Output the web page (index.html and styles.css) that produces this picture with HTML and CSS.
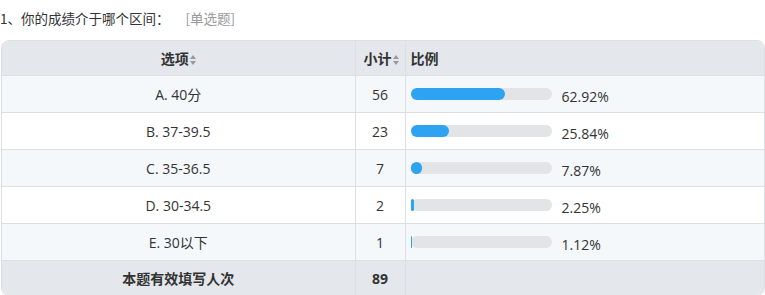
FILE: index.html
```html
<!DOCTYPE html>
<html lang="zh">
<head>
<meta charset="utf-8">
<link rel="stylesheet" href="styles.css">
</head>
<body>
<div class="q-title">1、你的成绩介于哪个区间：<span class="q-type">[单选题]</span></div>
<div class="tbl-wrap">
<table class="tbl">
<colgroup><col class="c1"><col class="c2"><col class="c3"></colgroup>
<thead>
<tr class="head"><th class="center">选项<span class="sort"></span></th><th class="center small">小计<span class="sort"></span></th><th class="left">比例</th></tr>
</thead>
<tbody>
<tr class="odd"><td class="center">A. 40分</td><td class="center">56</td><td><div class="ratio"><div class="bar"><div class="fill" style="width:67%"></div></div><span class="pct">62.92%</span></div></td></tr>
<tr><td class="center">B. 37-39.5</td><td class="center">23</td><td><div class="ratio"><div class="bar"><div class="fill" style="width:27.5%"></div></div><span class="pct">25.84%</span></div></td></tr>
<tr class="odd"><td class="center">C. 35-36.5</td><td class="center">7</td><td><div class="ratio"><div class="bar"><div class="fill" style="width:8%"></div></div><span class="pct">7.87%</span></div></td></tr>
<tr><td class="center">D. 30-34.5</td><td class="center">2</td><td><div class="ratio"><div class="bar"><div class="fill" style="width:3px"></div></div><span class="pct">2.25%</span></div></td></tr>
<tr class="odd"><td class="center">E. 30以下</td><td class="center">1</td><td><div class="ratio"><div class="bar"><div class="fill" style="width:1px"></div></div><span class="pct">1.12%</span></div></td></tr>
</tbody>
<tfoot>
<tr class="foot"><td class="center">本题有效填写人次</td><td class="center">89</td><td></td></tr>
</tfoot>
</table>
</div>
</body>
</html>
```
FILE: styles.css
```css
html, body { margin: 0; padding: 0; background: #fff; }
body {
  font-family: "Open Sans", "Noto Sans CJK SC", sans-serif;
  font-size: 13px;
  color: #333;
  padding: 0 0 0 1px;
}
.q-title {
  height: 40px;
  line-height: 36px;
  font-family: "Noto Sans CJK SC", sans-serif;
  font-size: 13.5px;
  color: #333;
  margin-left: -1px;
}
.q-type { color: #999; margin-left: 16px; }
.tbl-wrap {
  width: 762px;
  border: 1px solid #dcdfe4;
  border-radius: 8px;
  overflow: hidden;
}
.tbl {
  width: 100%;
  border-collapse: collapse;
  table-layout: fixed;
}
.c1 { width: 353px; }
.c2 { width: 50px; }
.tbl th, .tbl td {
  border-right: 1px solid #dcdfe4;
  border-bottom: 1px solid #dcdfe4;
  padding: 0;
  font-size: 14px;
}
.tbl th:last-child, .tbl td:last-child { border-right: none; }
.tbl tfoot td { border-bottom: none; }
.head th {
  height: 34px;
  background: #e4e7eb;
  font-weight: bold;
  font-size: 14px;
  color: #333;
}
.head th.small { padding-left: 2px; }
.head th.left { text-align: left; padding-left: 5px; }
.center { text-align: center; }
tbody td { height: 36px; background: #fff; }
tbody tr.odd td { background: #f5f8fb; }
.foot td { height: 34px; background: #e4e7eb; font-weight: bold; font-size: 14px; }
.sort {
  display: inline-block;
  position: relative;
  width: 6px;
  height: 10px;
  margin-left: 1px;
  vertical-align: -1px;
}
.sort::before, .sort::after {
  content: "";
  position: absolute;
  left: 0;
  border-left: 3px solid transparent;
  border-right: 3px solid transparent;
}
.sort::before { top: 0; border-bottom: 4px solid #999; }
.sort::after { bottom: 0; border-top: 4px solid #999; }
.ratio {
  display: flex;
  align-items: center;
  padding-left: 5px;
}
.bar {
  width: 141px;
  height: 12px;
  border-radius: 6px;
  background: #e3e4e6;
}
.fill {
  height: 100%;
  background: #2ea3f2;
  border-radius: 6px;
}
.pct { margin-left: 10px; margin-top: 4px; font-size: 14px; }
```
